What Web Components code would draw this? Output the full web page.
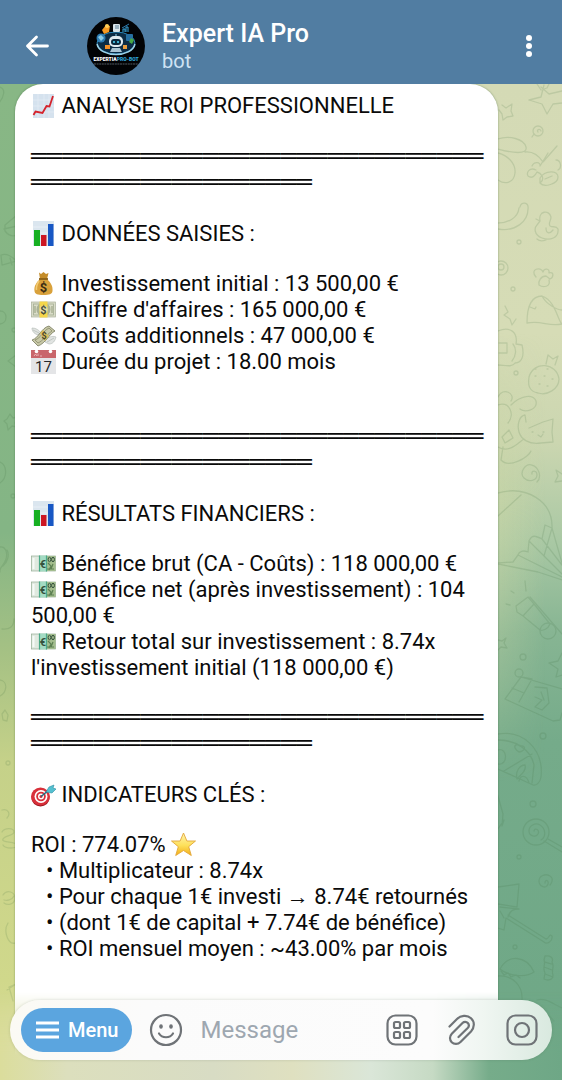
<!DOCTYPE html>
<html lang="fr">
<head>
<meta charset="utf-8">
<meta name="viewport" content="width=device-width, initial-scale=1">
<title>Expert IA Pro</title>
<style>
  html, body { margin: 0; height: 100%; }
  body { font-family: Roboto, "Noto Sans", sans-serif; color: #0a0a0a; background: #86b686; }
</style>
</head>
<body>
<chat-screen>
  <chat-header slot="header" name="Expert IA Pro" status="bot"></chat-header>
  <message-bubble>
    <message-heading><emoji-icon name="trend"></emoji-icon> ANALYSE ROI PROFESSIONNELLE</message-heading>
    <message-rule></message-rule>
    <message-heading><emoji-icon name="bars"></emoji-icon> DONNÉES SAISIES :</message-heading>
    <message-lines class="wide">
      <div><emoji-icon name="bag"></emoji-icon> Investissement initial : 13 500,00 €</div>
      <div><emoji-icon name="dollar"></emoji-icon> Chiffre d'affaires : 165 000,00 €</div>
      <div><emoji-icon name="wings"></emoji-icon> Coûts additionnels : 47 000,00 €</div>
      <div><emoji-icon name="calendar"></emoji-icon> Durée du projet : 18.00 mois</div>
    </message-lines>
    <message-rule></message-rule>
    <message-heading><emoji-icon name="bars"></emoji-icon> RÉSULTATS FINANCIERS :</message-heading>
    <message-lines>
      <div><emoji-icon name="euro"></emoji-icon> Bénéfice brut (CA - Coûts) : 118 000,00 €</div>
      <div><emoji-icon name="euro"></emoji-icon> Bénéfice net (après investissement) : 104 500,00 €</div>
      <div><emoji-icon name="euro"></emoji-icon> Retour total sur investissement : 8.74x l'investissement initial (118 000,00 €)</div>
    </message-lines>
    <message-rule></message-rule>
    <message-heading><emoji-icon name="target"></emoji-icon> INDICATEURS CLÉS :</message-heading>
    <message-lines>
      <div>ROI : 774.07% <emoji-icon name="star"></emoji-icon></div>
      <div class="item">• Multiplicateur : 8.74x</div>
      <div class="item">• Pour chaque 1€ investi → 8.74€ retournés</div>
      <div class="item">• (dont 1€ de capital + 7.74€ de bénéfice)</div>
      <div class="item">• ROI mensuel moyen : ~43.00% par mois</div>
    </message-lines>
  </message-bubble>
  <message-composer slot="composer"></message-composer>
</chat-screen>

<script>
function attach(el, html) {
  const template = document.createElement("template")
  template.innerHTML = html
  el.attachShadow({ mode: "open" }).append(template.content.cloneNode(true))
}

///////////////////// Emoji //////////////////////
const EMOJI = {
  trend: `<rect x="2" y="1" width="21" height="24" fill="#d5e2ee"/>
    <path d="M2 7h21M2 13h21M2 19h21M7 1v24M13 1v24M18 1v24" stroke="#e3ecf4" stroke-width=".8"/>
    <path d="M2.500 22l2-3.500 7 1.500 4-7 3 .5L22 3" fill="none" stroke="#d5232c" stroke-width="1.800"/>`,
  bars: `<rect x="2" y="0" width="21" height="25" fill="#dbe6ef"/>
    <path d="M2 6h21M2 12h21M2 18h21" stroke="#e8eff5"/>
    <path d="M3 9h6v16H3z" fill="#17b023"/><path d="M10 14h5.500v11H10z" fill="#cc1623"/><path d="M17 3h5.500v22H17z" fill="#1857c4"/>`,
  bag: `<path d="M8 1.500l2 1.500 2.500-2 2.500 2 2.500-1L16 8h-7z" fill="#c58d2a"/>
    <path d="M9 8h7c4 4 6 7 5.500 12-.3 3-3 4-9 4s-8.700-1-9-4C3 15 5 12 9 8z" fill="#d9a13b"/>
    <path d="M8 10c-2 3-3 6-2.500 9" fill="none" stroke="#f3cb72" stroke-width="1.600"/>
    <path d="M8 8h9" stroke="#8c6118" stroke-width="1.800"/>
    <text x="12.500" y="21" font-size="13" font-weight="700" text-anchor="middle" fill="#3b2d14">$</text>`,
  dollar: `<rect x=".5" y="5" width="24" height="15" fill="#d9dcc8" stroke="#a9b09a" stroke-width=".7"/>
    <rect x="2.500" y="7" width="20" height="11" fill="none" stroke="#8f987c" stroke-width=".8" opacity=".7"/>
    <circle cx="12.500" cy="12.500" r="7" fill="#a9b194"/><path d="M4 9v7M21 9v7" stroke="#a9b194" stroke-width="1.500"/>
    <path d="M8.500 4.500h8v16h-8z" fill="#f5d64a"/><circle cx="12.500" cy="12.500" r="4" fill="#e6dfa6"/>
    <text x="12.500" y="16.500" font-size="11" font-weight="700" text-anchor="middle" fill="#4b4f3b">$</text>`,
  euro: `<rect x=".5" y="5" width="24" height="15" fill="#dfe9df" stroke="#94ad94" stroke-width=".7"/>
    <path d="M15 5h9.500v15H15z" fill="#a3bd8e"/>
    <path d="M17 12l3 3-2 4M22 13l-2 5M16 18h7" stroke="#5d8053" stroke-width="1.200" fill="none"/>
    <ellipse cx="18.500" cy="8.500" rx="1.400" ry="2.200" fill="none" stroke="#34513d"/><ellipse cx="22" cy="8.500" rx="1.400" ry="2.200" fill="none" stroke="#34513d"/>
    <path d="M2.500 7v11" stroke="#f7faf7" stroke-width="2"/>
    <path d="M8 4.500h8v16H8z" fill="#a3dbc3"/><path d="M8.500 4.500v16M15.500 4.500v16" stroke="#4aa988" stroke-width="1.200"/>
    <text x="12" y="16.500" font-size="11" font-weight="700" text-anchor="middle" fill="#34513d">€</text>`,
  wings: `<path d="M1 5c4 0 7 2 9 5l-3 2C4 11 1 9 1 5zM15 16c4-3 8-3 10-2-1 4-3 7-7 7l-4-2z" fill="#e1e4e2" stroke="#b8bfba" stroke-width=".7"/>
    <path d="M2 7l6 3M16 19l7-4" stroke="#b8bfba" stroke-width=".8"/>
    <path d="M1 17C8 15 10 5 18 3l6 5c-6 3-9 12-17 15z" fill="#c8c9a8" stroke="#75775b" stroke-width=".8"/>
    <path d="M4 17c6-2 8-9 14-12l3 3C15 12 12 18 7 20z" fill="none" stroke="#8a8c6c" stroke-width=".8"/>
    <path d="M9 10l3-3 6 6-4 5z" fill="#dcbf5c"/>
    <text x="13" y="16" font-size="9" font-weight="700" text-anchor="middle" fill="#46452d">$</text>`,
  calendar: `<rect x="0" y="1" width="25" height="24" fill="#e4e5e7"/><path d="M0 1h25v8H0z" fill="#c9666b"/>
    <circle cx="5.500" cy="2.500" r="1.800" fill="#fff"/><circle cx="19.500" cy="2.500" r="1.800" fill="#fff"/>
    <path d="M3 7l1.500-2L6 7M7 7V4.500M9 7h2" stroke="#f0c6c8" stroke-width=".8" fill="none"/>
    <text x="12.500" y="23" font-size="15" text-anchor="middle" fill="#26282b">17</text>`,
  target: `<ellipse cx="9.500" cy="16" rx="9" ry="8.500" fill="#9c151f"/><ellipse cx="9.500" cy="14.500" rx="9.500" ry="9" fill="#d8303a"/>
    <circle cx="10" cy="14.500" r="6.500" fill="#fff"/><circle cx="10" cy="14.500" r="4.800" fill="#d8303a"/>
    <circle cx="10" cy="14.500" r="3" fill="#fff"/><circle cx="10" cy="14.500" r="1.500" fill="#d8303a"/>
    <path d="M10 14.500L18 8" stroke="#1d6d84" stroke-width="1.500"/>
    <path d="M15 10l3-5 5-2-1 3 3 1-4 4z" fill="#54c0d0" stroke="#2b8fa3" stroke-width=".6"/>`,
  star: `<defs><linearGradient id="s" x2="0" y2="1"><stop stop-color="#fff3b0"/><stop offset=".55" stop-color="#fde05a"/><stop offset="1" stop-color="#f3ae17"/></linearGradient></defs>
    <path d="M12.500 1l3.400 8h8.600l-6.800 5.700 2.600 8.800-7.800-5-7.800 5 2.600-8.800L.5 9h8.600z" fill="url(#s)" stroke="#e2a637" stroke-width=".9" stroke-linejoin="round"/>`
}

class EmojiIcon extends HTMLElement {
  constructor() {
    super()
    attach(this, `
      <style>
        :host { display: inline-block; width: 25px; height: 25px; vertical-align: middle; margin-top: -3px; }
        svg { display: block; overflow: visible; }
      </style>
      <svg width="25" height="25" viewBox="0 0 25 25" aria-hidden="true">${EMOJI[this.getAttribute("name")] || ""}</svg>`)
  }
}
customElements.define("emoji-icon", EmojiIcon)

///////////////////// Message parts //////////////////////
class MessageHeading extends HTMLElement {
  constructor() {
    super()
    attach(this, `<style>:host { display: block; margin-bottom: 25px; }</style><slot></slot>`)
  }
}
customElements.define("message-heading", MessageHeading)

class MessageRule extends HTMLElement {
  constructor() {
    super()
    attach(this, `
      <style>
        :host { display: block; margin-bottom: 25px; overflow-wrap: anywhere; font: 26px/26px "Liberation Mono", monospace; }
      </style>
      ${"═".repeat(47)}`)
  }
}
customElements.define("message-rule", MessageRule)

class MessageLines extends HTMLElement {
  constructor() {
    super()
    attach(this, `
      <style>
        :host { display: block; margin: -1px 0 24px; }
        :host(.wide) { margin-bottom: 49px; }
        ::slotted(.item) { padding-left: 15px; }
      </style>
      <slot></slot>`)
  }
}
customElements.define("message-lines", MessageLines)

class MessageBubble extends HTMLElement {
  constructor() {
    super()
    attach(this, `
      <style>
        :host {
          display: block; box-sizing: border-box; flex: 1;
          margin: 0 64px 0 15px; padding: 9px 13px 100px 16px;
          background: #fff; border-radius: 28px 28px 0 0;
          box-shadow: 0 0 2px rgba(40, 80, 40, .5);
          font-size: 22px; line-height: 26px;
        }
      </style>
      <slot></slot>`)
  }
}
customElements.define("message-bubble", MessageBubble)

///////////////////// Wallpaper //////////////////////
class ChatWallpaper extends HTMLElement {
  constructor() {
    super()
    attach(this, `
      <style>
        :host { position: absolute; inset: 0; overflow: hidden;
          background: linear-gradient(#88b785, #84b585 45%, #a5c184 57%, #c5d189 68%, #d0d88b 90%, #dcdc9c); }
        .shade { position: absolute; inset: 0;
          background: linear-gradient(#d4dab5, #d6dcb6 25%, #cbd6b0 36%, #a9c8a4 46%, #87b593 55%, #75ab8a 66%, #6ea786);
          -webkit-mask: linear-gradient(90deg, transparent 20%, #000 85%); mask: linear-gradient(90deg, transparent 20%, #000 85%); }
        .glow { position: absolute; inset: 0;
          background: linear-gradient(90deg, transparent 87%, rgba(205, 215, 165, .55) 89%, transparent 97%);
          -webkit-mask: linear-gradient(transparent 25%, #000 42%, transparent 70%); mask: linear-gradient(transparent 25%, #000 42%, transparent 70%); }
        svg { position: absolute; top: 0; fill: none; stroke: #3d6b3d; stroke-width: 1.3; opacity: .15;
          stroke-linecap: round; stroke-linejoin: round; }
        .left { left: 0; }
        .right { right: 0; }
      </style>
      <div class="shade"></div>
      <div class="glow"></div>
      <svg class="left" width="20" height="996" viewBox="0 84 20 996">
        <path d="M0 87c6 2 4 10-1 16M5 225l12-10v20c-5 2-9 0-12-4zM4 229l13-3M1 255c6-2 12 2 15 6l-14 4zM10 258l2 7M0 311c8 0 8 12 0 13M8 361l8-6v12zM7 419l3-5 3 4 4-1-2 6 2 4-5-1-4 4-1-6-3-3zM0 462c7 3 8 15 0 21M0 547c5-1 8 5 6 12s-7 8-6 13M7 550c3 5 0 13-4 16M2 629c8 1 12-3 12-10M0 680c8 1 8 13-2 17M2 714l3-4 3 5-1 6-4-1zM2 832c3-5 12-4 12 0s-9 3-11 7 13 2 14 6-12 4-14 0M3 895c4-6 12-3 12 3s-7 8-11 5M4 900c3 1 8 0 10-4M8 923c-5 8 0 22 7 20M2 810c6-2 9 4 5 8M7 990l9-6-7 3 4 14"/>
        <circle cx="14" cy="330" r="2"/><circle cx="13" cy="496" r="2"/><circle cx="8" cy="763" r="2"/>
      </svg>
      <svg class="right" width="64" height="996" viewBox="498 84 64 996">
        <path d="M537 84l4 6 6-2 3-6M529 100l12-3 3-12M541 87l8 7 13-3M562 103l-9 1-6 10-5-10-13-4M502 105l4 3 6-4-1 7 2 5-6 1-4 3-1-6-3-4"/>
        <circle cx="538" cy="131" r="5"/><path d="M538 132c-2-2 2-4 3-1M534 134l-2 3"/>
        <path d="M498 139c11-4 26 0 28 8s-14 6-28 2M498 153c9 2 18 10 17 20s-10 12-17 7M525 152c9-1 14 4 18 10l14-16M532 166c2-5 9-4 8 0l8-13M536 170c-6-3-10 2-8 6 4 3 7 0 9-4 4 1 8 6 4 10M540 178c5-8 18-8 18-1s-14 11-18 6zM545 179l7-3M556 160c5 0 6 8 2 10"/>
        <path d="M520 207c1-6 9-5 8 2 0 12-12 23-30 20M498 223c10 0 20-5 21-15M540 221c-2-10 9-12 11-4 0 4-3 6-1 9 3 2 6-1 8 3 1 9-8 12-16 9s-8-10-5-13l3-4-4-2zM546 228c0 6 4 6 7 2M537 239c2 2 6 2 9 1"/>
        <path d="M536 277c-7-8 5-11 7-5 1-4 7-4 6 1 5-2 5 4 1 6l-4-3c-5 0-8 5-7 9 4 3 12 2 10-5"/>
        <circle cx="501" cy="268" r="7"/><circle cx="501" cy="267" r="3"/><circle cx="513" cy="289" r="2"/><circle cx="516" cy="373" r="2"/><circle cx="519" cy="242" r="2"/>
        <path d="M505 306l3 6-4 3 6 4 2 6 4-6M527 323c0-15 4-27 15-27 13 4 16 25 20 28-14 3-20-4-35-1M530 307l5 2 1-2M542 296c4 8 15 14 20 14"/>
        <path d="M498 331c12-5 20 1 18 13l6 1c3 12-1 18-7 18-3 5-11 2-17 2M499 343h8v10h-8M513 344c4 5 3 12-1 17"/>
        <path d="M529 377c5-17 28-14 30 2 0 10-12 17-21 14-10-2-10-9-9-16zM546 364l2-9 5 4 5-3-3 9M535 376h1M544 376h1M552 379h1M539 384h1M547 386h1M535 369h1M547 369h1"/>
        <path d="M498 397c5-11 18-3 13 4M498 405c12-4 17 10 10 18M511 405c10-10 22-11 25-4 2 9-11 12-16 8M526 422l-1-7c-6 1-8 10-6 17s10 13 22 11l12-1-1-10 1-13-10 3-14 6M532 432h1M543 432h1M538 435l3 2 2-3M502 437l7-7 4 8-8 5zM498 447c12 7 22-6 26-8M503 447l-2 13c8 9 28-3 30-9"/>
        <path d="M532 474c-1-4 5-4 5 1s-8 8-13 3 1-15 8-13 10 12 5 17M562 474l-6-4 2 6-3 6 7-1"/>
        <path d="M498 493c28-8 55 8 54 35l-7-3-3 14c-6-3-10-5-13 2l-1 11c-5-2-9-1-10 3l-5 7-15 1M521 495l-23 21M498 564l40 8 24 8M552 528l-8 28M552 528l10 35M542 539l20 26M529 541l33 33M518 555l44 22"/>
        <path d="M516 606l12-9 6 7-11 12-6-4zM534 604l16 20c-2 5-7 7-10 6l-17-14M530 597l32 37M525 581l1 10M511 591l3 2M506 604l4 1"/>
        <circle cx="548" cy="631" r="8"/><path d="M498 640l4 1 4-3-2 5 3 5-6-1-3 3M549 663l9-2 4-8M549 663l9 6-2 8 6-2"/>
        <circle cx="523" cy="657" r="3"/><circle cx="519" cy="673" r="4"/>
        <path d="M505 699l16-22 41 12M521 677l11 2-13 23M505 699l48 22 7-1 2-7M512 688l12 5M535 687l12 1 2 15-7 7-7-3 7-7-7-3M541 692l3 8"/>
        <path d="M498 734c24-4 46 14 43 43-1 6-5 9-8 8l-35-16M498 740c18 0 33 10 36 25l-2 18M504 771l28-17M498 750c10-3 10 16 0 14M519 752c-8-5-3-10 2-6 4-1 6 4-2 6M525 765c2 6-5 10-8 14-2-8 3-14 8-14M519 781c1-7 8-6 10 2"/>
        <circle cx="543" cy="736" r="3"/><circle cx="533" cy="804" r="3"/><circle cx="536" cy="832" r="13"/><path d="M534 831c1-4 6-1 4 3s-9 2-9-3 6-9 11-6 7 11 1 15M548 839l14 8M544 841l18 11M498 796l5 18-1 12 2-6-6 9"/>
        <circle cx="519" cy="857" r="2"/><path d="M545 883c0-4 4-3 3 1-2 6-9 2-9-3s6-8 11-5 0 9 0 9"/>
        <path d="M498 887l21-3-2 23-19-3M508 917c2-7 6-8 11-8l-19-2M508 915l38 24c4-1 3-6 6-3 1 5-5 9-8 6l-38-24-2 12-6-2M500 911l4 7"/>
        <circle cx="515" cy="947" r="2"/>
        <path d="M500 969c8-15 26-14 34 3-8 6-26 4-34-3zM498 976c15-1 25 10 24 24M501 971l3 4 4-2 3 4 5-2 4 3M545 956c5-1 9 2 7 6 3 5-1 8 1 13 0 5-5 6-9 4l1-6c-3-5 1-9-1-13zM545 962l7 2M544 967l8 3M545 974l8 3M537 1000c8-3 16 4 25 8M536 1005c5 7 12 8 18 16"/>
      </svg>`)
  }
}
customElements.define("chat-wallpaper", ChatWallpaper)

///////////////////// Header //////////////////////
class BotAvatar extends HTMLElement {
  constructor() {
    super()
    attach(this, `
      <style>:host { display: block; } svg { display: block; }</style>
      <svg width="58" height="58" viewBox="0 0 58 58" role="img" aria-label="ExpertIA Pro-Bot">
        <circle cx="29" cy="29" r="29" fill="#020305"/>
        <ellipse cx="29" cy="26" rx="19" ry="11" fill="#0c2c45" stroke="#2a86b8"/>
        <path d="M10 27c3 14 35 14 38 0" fill="none" stroke="#9ed3e8" stroke-width="1.500"/>
        <circle cx="14" cy="21" r="4.500" fill="#2d7db4"/><path d="M11 20l3-2 3 3-3 3z" fill="#8ccce8"/>
        <path d="M15 13l4-5 4 1-1 6-5 2z" fill="#f59a23"/><circle cx="20" cy="9" r="2" fill="#ffd05a"/>
        <rect x="26" y="7" width="7" height="8" rx="1" fill="#d8e4ea"/><path d="M28 9h4M28 11h4" stroke="#597d94"/>
        <path d="M36 15V12h2v3M39 15v-5h2v5" stroke="#39a9e0" fill="none"/><path d="M35 11l7-4" stroke="#2d7db4"/>
        <rect x="39" y="17" width="7" height="7" rx="1" fill="#266fa1"/><path d="M44 21l3 2-2 4-3-2z" fill="#47a944"/>
        <rect x="18" y="28" width="5" height="4" fill="#f49028"/><rect x="36" y="28" width="4" height="4" fill="#e99b3b"/>
        <path d="M29 17v3" stroke="#8fd4ef"/><rect x="22" y="19" width="14" height="11" rx="5" fill="#dfeaf0"/>
        <rect x="24" y="22" width="10" height="6" rx="3" fill="#09273c"/><circle cx="27" cy="25" r="1" fill="#50dcff"/><circle cx="31" cy="25" r="1" fill="#50dcff"/>
        <path d="M25 31h8l2 4H23z" fill="#a9c4d2"/>
        <text x="29" y="44" text-anchor="middle" font-size="5" font-weight="900" fill="#fff">EXPERTIA<tspan fill="#31a8dc">PRO-BOT</tspan></text>
        <path d="M7 47h44" stroke="#76828a" stroke-width=".7" stroke-dasharray="2 .6"/>
      </svg>`)
  }
}
customElements.define("bot-avatar", BotAvatar)

class ChatHeader extends HTMLElement {
  constructor() {
    super()
    attach(this, `
      <style>
        :host { display: flex; align-items: center; box-sizing: border-box; height: 84px; padding: 8px 17px 0 21px;
          background: #517da2; color: #fff; }
        button { display: grid; place-items: center; width: 32px; height: 32px; padding: 0; border: 0; background: none; color: inherit; }
        bot-avatar { margin-left: 34px; }
        .who { flex: 1; min-width: 0; margin-left: 17px; }
        h1 { margin: 0; font-size: 25px; line-height: 30px; font-weight: 500; }
        p { margin: 0; font-size: 20px; line-height: 24px; color: #cfe3f4; }
      </style>
      <button type="button" aria-label="Retour">
        <svg width="24" height="24" viewBox="0 0 24 24" fill="none" stroke="currentColor" stroke-width="2.800" stroke-linecap="round" stroke-linejoin="round"><path d="M22.500 12H2.500M11.500 3l-9 9 9 9"/></svg>
      </button>
      <bot-avatar></bot-avatar>
      <div class="who">
        <h1>${this.getAttribute("name")}</h1>
        <p>${this.getAttribute("status")}</p>
      </div>
      <button type="button" aria-label="Plus">
        <svg width="6" height="24" viewBox="0 0 6 24" fill="currentColor"><circle cx="3" cy="4" r="3"/><circle cx="3" cy="12" r="3"/><circle cx="3" cy="20" r="3"/></svg>
      </button>`)
  }
}
customElements.define("chat-header", ChatHeader)

///////////////////// Composer //////////////////////
class MessageComposer extends HTMLElement {
  constructor() {
    super()
    attach(this, `
      <style>
        :host { display: block; position: relative; padding: 20px 10px; }
        /* frosted strip below the pill */
        .haze { position: absolute; inset: 0;
          background: linear-gradient(90deg, #dbdd9c, #dcdfbd 12%, #d8dcc4 38%, #dfe0c0 52%, #dae6d8 66%, #c6dac4 77%, #76ac8a 87%, #6ea786);
          -webkit-mask: linear-gradient(transparent 12%, #000 75%); mask: linear-gradient(transparent 12%, #000 75%); }
        form { position: relative; display: flex; align-items: center; box-sizing: border-box; height: 60px; padding: 0 14px 0 11px;
          border-radius: 30px; background: linear-gradient(90deg, #fbfaf4, #fbfbfb 25%, #fcfcfc 78%, #f0f6f2 87%, #d9e9df);
          box-shadow: 0 0 3px rgba(60, 80, 60, .2); color: #6f7377; }
        button { display: grid; place-items: center; padding: 0; border: 0; background: none; color: inherit; font: inherit; }
        .menu { display: flex; align-items: center; gap: 9px; height: 44px; padding: 0 14px 0 15px; border-radius: 22px;
          background: #5ba5df; color: #fff; font-size: 20px; font-weight: 500; }
        .smile { margin-left: 17px; }
        input { flex: 1; min-width: 0; margin-left: 17px; padding: 0; border: 0; outline: 0; background: none; font: 24px/32px Roboto, sans-serif; color: #222; }
        input::placeholder { color: #9ea7b0; opacity: 1; }
        .tools { display: flex; gap: 28px; }
        svg { fill: none; stroke: currentColor; stroke-width: 2.2; stroke-linecap: round; stroke-linejoin: round; }
      </style>
      <div class="haze"></div>
      <form>
        <button class="menu" type="button">
          <svg width="23" height="18" viewBox="0 0 23 18" style="stroke-width:3;stroke-linecap:butt"><path d="M0 2h23M0 9h23M0 16h23"/></svg>
          Menu
        </button>
        <button class="smile" type="button" aria-label="Emoji">
          <svg width="34" height="34" viewBox="0 0 34 34"><circle cx="17" cy="17" r="15"/><path d="M10 20.500c3 5 11 5 14 0"/><ellipse cx="12" cy="13.500" rx="1.800" ry="2.300" fill="currentColor" stroke="none"/><ellipse cx="22" cy="13.500" rx="1.800" ry="2.300" fill="currentColor" stroke="none"/></svg>
        </button>
        <input type="text" placeholder="Message" aria-label="Message">
        <div class="tools">
          <button type="button" aria-label="Applications">
            <svg width="32" height="32" viewBox="0 0 32 32"><rect x="1.500" y="1.500" width="29" height="29" rx="8"/><rect x="8" y="8" width="6" height="6" rx="1.500"/><rect x="18" y="8" width="6" height="6" rx="1.500"/><rect x="8" y="18" width="6" height="6" rx="1.500"/><rect x="18" y="18" width="6" height="6" rx="1.500"/></svg>
          </button>
          <button type="button" aria-label="Joindre un fichier">
            <svg width="32" height="32" viewBox="0 0 32 32"><path d="M3.500 12.500l7.500-7.500c3.500-3.500 10-4.500 14-.8s3.500 9.500 0 13.300L14.500 28c-2.500 2.500-6.500 2.500-8.800.2s-2.300-6 .1-8.500L16.500 9c1.500-1.500 4-1.500 5.300 0s1.300 3.500-.1 5L12.500 23"/></svg>
          </button>
          <button type="button" aria-label="Caméra">
            <svg width="32" height="32" viewBox="0 0 32 32"><rect x="1.500" y="1.500" width="29" height="29" rx="8"/><circle cx="16" cy="16" r="7"/></svg>
          </button>
        </div>
      </form>`)
  }
}
customElements.define("message-composer", MessageComposer)

///////////////////// Screen //////////////////////
class ChatScreen extends HTMLElement {
  constructor() {
    super()
    attach(this, `
      <style>
        :host { display: flex; flex-direction: column; height: 100vh; overflow: hidden; }
        main { position: relative; flex: 1; min-height: 0; overflow: hidden; }
        .messages { position: relative; display: flex; flex-direction: column; min-height: 100%; }
        .composer { position: absolute; left: 0; right: 0; bottom: 0; }
      </style>
      <slot name="header"></slot>
      <main>
        <chat-wallpaper></chat-wallpaper>
        <div class="messages"><slot></slot></div>
        <div class="composer"><slot name="composer"></slot></div>
      </main>`)
  }
}
customElements.define("chat-screen", ChatScreen)
</script>
</body>
</html>
